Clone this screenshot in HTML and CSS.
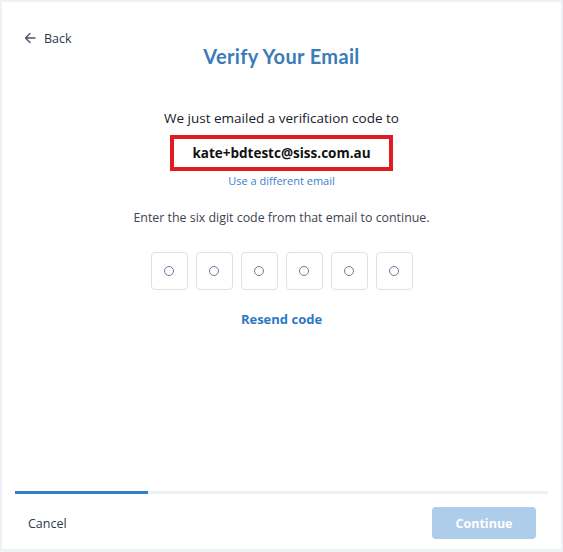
FILE: index.html
```html
<!DOCTYPE html>
<html>
<head>
<meta charset="utf-8">
<link rel="stylesheet" href="styles.css">
</head>
<body>
<div class="frame">
  <div class="card">
    <div class="top">
      <a class="back" href="#">
        <svg width="12" height="12" viewBox="0 0 12 12"><path d="M11 6H1.5M6 1.5L1.5 6L6 10.5" fill="none" stroke="#4a5568" stroke-width="1.4" stroke-linecap="round" stroke-linejoin="round"/></svg>
        <span>Back</span>
      </a>
    </div>
    <h1 class="title">Verify Your Email</h1>
    <p class="lead">We just emailed a verification code to</p>
    <div class="email">kate+bdtestc@siss.com.au</div>
    <a class="diff" href="#">Use a different email</a>
    <p class="hint">Enter the six digit code from that email to continue.</p>
    <div class="codes">
      <div class="code"><span class="dot"></span></div>
      <div class="code"><span class="dot"></span></div>
      <div class="code"><span class="dot"></span></div>
      <div class="code"><span class="dot"></span></div>
      <div class="code"><span class="dot"></span></div>
      <div class="code"><span class="dot"></span></div>
    </div>
    <a class="resend" href="#">Resend code</a>
    <div class="spacer"></div>
    <div class="progress"><div class="fill" style="width:25%"></div></div>
    <div class="footer">
      <a class="cancel" href="#">Cancel</a>
      <button class="continue">Continue</button>
    </div>
  </div>
</div>
</body>
</html>
```
FILE: styles.css
```css
html, body {
  margin: 0;
  padding: 0;
}
body {
  width: 563px;
  height: 552px;
  background: #eef1f5;
  font-family: "Open Sans", "Noto Sans", sans-serif;
}
.frame {
  box-sizing: border-box;
  width: 563px;
  height: 552px;
  padding: 2px 2px 3px 2px;
}
.card {
  box-sizing: border-box;
  height: 100%;
  background: #fff;
  display: flex;
  flex-direction: column;
  align-items: center;
  padding: 0 13px 0 13px;
}
.top {
  align-self: stretch;
  height: 20px;
  padding-top: 25px;
}
.back {
  display: inline-flex;
  align-items: center;
  gap: 8px;
  margin-left: 9px;
  color: #2d3748;
  text-decoration: none;
  font-size: 12.5px;
}
.title {
  margin: -4px 0 0 0;
  font-family: "Lato", "Open Sans", sans-serif;
  font-size: 20px;
  font-weight: 700;
  letter-spacing: 0.35px;
  color: #3b7bb6;
  line-height: 26px;
}
.lead {
  margin: 39px 0 0 0;
  font-size: 13.5px;
  color: #1a202c;
  line-height: 20px;
}
.email {
  margin-top: 7px;
  box-sizing: border-box;
  width: 223px;
  height: 36px;
  border: 4px solid #e01b22;
  display: flex;
  align-items: center;
  justify-content: center;
  font-size: 13.5px;
  font-weight: 700;
  color: #111;
}
.diff {
  margin-top: 2px;
  font-size: 11px;
  color: #3a82c8;
  text-decoration: none;
  line-height: 16px;
}
.hint {
  margin: 20px 0 0 0;
  font-size: 12.4px;
  color: #3d4451;
  line-height: 18px;
}
.codes {
  margin-top: 25px;
  display: flex;
  gap: 8px;
}
.code {
  box-sizing: border-box;
  width: 37px;
  height: 38px;
  border: 1px solid #dde2ea;
  border-radius: 4px;
  display: flex;
  align-items: center;
  justify-content: center;
}
.dot {
  width: 8px;
  height: 8px;
  border: 1.2px solid #6c7a96;
  border-radius: 50%;
}
.resend {
  margin-top: 20px;
  font-size: 13px;
  font-weight: 700;
  color: #2c78c4;
  text-decoration: none;
  line-height: 18px;
}
.spacer {
  flex: 1;
}
.progress {
  align-self: stretch;
  height: 3px;
  background: #edf1f6;
  margin-bottom: 13px;
}
.fill {
  height: 100%;
  background: #2f80d0;
}
.footer {
  align-self: stretch;
  display: flex;
  justify-content: space-between;
  align-items: center;
  padding: 0 12px 10px 13px;
}
.cancel {
  font-size: 12.5px;
  color: #2d3748;
  text-decoration: none;
}
.continue {
  width: 104px;
  height: 32px;
  border: none;
  border-radius: 4px;
  background: #aecdeb;
  color: #fff;
  font-family: "Open Sans", "Noto Sans", sans-serif;
  font-size: 12.5px;
  font-weight: 700;
}
```
